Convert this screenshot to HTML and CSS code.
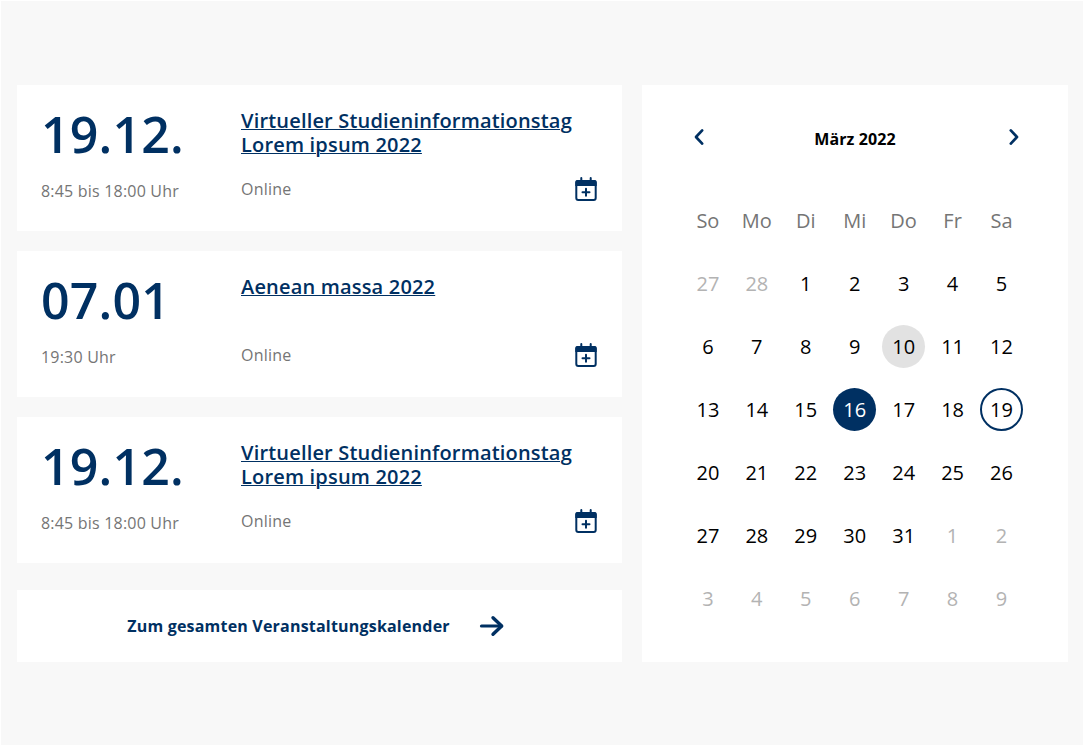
FILE: index.html
```html
<!DOCTYPE html>
<html lang="de">
<head>
<meta charset="utf-8">
<title>Veranstaltungen</title>
<link rel="stylesheet" href="styles.css">
</head>
<body>
<svg class="symbols" aria-hidden="true">
  <symbol id="calendar-plus" viewBox="0 0 22 24">
    <rect x="1.300" y="4" width="19.400" height="19" rx="2" fill="none" stroke="currentColor" stroke-width="2"/>
    <path d="M2.300 3h17.400a2 2 0 0 1 2 2v4H.300V5a2 2 0 0 1 2-2z" fill="currentColor"/>
    <path d="M6.300 4V1M15.700 4V1M11 11.800v7M7.500 15.300h7" fill="none" stroke="currentColor" stroke-width="2" stroke-linecap="round"/>
  </symbol>
</svg>
<main class="layout">
  <section class="events">
    <article class="event">
      <div class="when"><div class="date">19.12.</div><div class="time">8:45 bis 18:00 Uhr</div></div>
      <div class="info"><a class="title" href="#">Virtueller Studieninformationstag Lorem ipsum 2022</a><div class="place">Online<svg class="add"><use href="#calendar-plus"/></svg></div></div>
    </article>
    <article class="event">
      <div class="when"><div class="date">07.01</div><div class="time">19:30 Uhr</div></div>
      <div class="info"><a class="title" href="#">Aenean massa 2022</a><div class="place">Online<svg class="add"><use href="#calendar-plus"/></svg></div></div>
    </article>
    <article class="event">
      <div class="when"><div class="date">19.12.</div><div class="time">8:45 bis 18:00 Uhr</div></div>
      <div class="info"><a class="title" href="#">Virtueller Studieninformationstag Lorem ipsum 2022</a><div class="place">Online<svg class="add"><use href="#calendar-plus"/></svg></div></div>
    </article>
    <a class="all" href="#">Zum gesamten Veranstaltungskalender
      <svg class="arrow" viewBox="0 0 26 22"><path d="M2.500 11H22.500" fill="none" stroke="currentColor" stroke-width="3.200" stroke-linecap="round"/><path d="M14 2.700l8.700 8.300-8.700 8.300" fill="none" stroke="currentColor" stroke-width="3.400" stroke-linecap="round" stroke-linejoin="round"/></svg>
    </a>
  </section>
  <section class="calendar">
    <header class="month">
      <svg class="chevron" viewBox="0 0 12 18"><path d="M9.200 2.400L3 9l6.200 6.600" fill="none" stroke="currentColor" stroke-width="2.700" stroke-linecap="round" stroke-linejoin="round"/></svg>
      <span class="month-name">März 2022</span>
      <svg class="chevron" viewBox="0 0 12 18"><path d="M2.800 2.400L9 9l-6.200 6.600" fill="none" stroke="currentColor" stroke-width="2.700" stroke-linecap="round" stroke-linejoin="round"/></svg>
    </header>
    <div class="days">
      <span class="head">So</span><span class="head">Mo</span><span class="head">Di</span><span class="head">Mi</span><span class="head">Do</span><span class="head">Fr</span><span class="head">Sa</span>
      <span class="out">27</span><span class="out">28</span><span>1</span><span>2</span><span>3</span><span>4</span><span>5</span>
      <span>6</span><span>7</span><span>8</span><span>9</span><span class="hover">10</span><span>11</span><span>12</span>
      <span>13</span><span>14</span><span>15</span><span class="selected">16</span><span>17</span><span>18</span><span class="today">19</span>
      <span>20</span><span>21</span><span>22</span><span>23</span><span>24</span><span>25</span><span>26</span>
      <span>27</span><span>28</span><span>29</span><span>30</span><span>31</span><span class="out">1</span><span class="out">2</span>
      <span class="out">3</span><span class="out">4</span><span class="out">5</span><span class="out">6</span><span class="out">7</span><span class="out">8</span><span class="out">9</span>
    </div>
  </section>
</main>
</body>
</html>
```

FILE: styles.css
```css
* { box-sizing: border-box; }
html { background: #fff; }
body {
  margin: 0;
  background: #fff;
  font-family: "Open Sans", sans-serif;
  color: #000;
}
.symbols { display: none; }
.layout {
  display: grid;
  grid-template-columns: 605px 426px;
  gap: 20px;
  height: 745px;
  padding: 84px 0 0 16px;
  border-top: 1px solid #fff;
  border-left: 1px solid #fff;
  background: #f8f8f8;
}
.events { display: flex; flex-direction: column; gap: 20px; letter-spacing: 0.2px; }
.event {
  display: grid;
  grid-template-columns: 200px 1fr;
  height: 146px;
  padding: 24px;
  background: #fff;
}
.date {
  height: 50px;
  font-size: 50px;
  line-height: 50px;
  font-weight: 600;
  color: #003062;
}
.time { margin-top: 20px; }
.time, .place { font-size: 16px; line-height: 24px; color: #757575; }
.info { display: flex; flex-direction: column; justify-content: space-between; }
.title {
  font-size: 20px;
  line-height: 24px;
  font-weight: 600;
  letter-spacing: 0.18px;
  color: #003062;
  text-decoration-thickness: 1px;
}
.place { display: flex; justify-content: space-between; margin-bottom: 6px; }
.add { width: 22px; height: 24px; color: #003062; margin-right: 1px; }
.all {
  display: flex;
  align-items: center;
  justify-content: center;
  gap: 29px;
  height: 72px;
  margin-top: 7px;
  padding-right: 7px;
  background: #fff;
  color: #003062;
  font-size: 16px;
  font-weight: 700;
  text-decoration: none;
}
.arrow { width: 26px; height: 22px; }
.calendar { height: 577px; padding: 40px 41px; background: #fff; }
.month {
  display: flex;
  justify-content: space-between;
  height: 24px;
  padding: 0 7px 0 10px;
  font-size: 16px;
  line-height: 28px;
  font-weight: 700;
  letter-spacing: 0.1px;
}
.month-name { margin-right: 3px; }
.chevron { width: 12px; height: 18px; margin-top: 3px; color: #003062; }
.days {
  display: grid;
  grid-template-columns: repeat(7, 43px);
  grid-auto-rows: 43px;
  gap: 20px 5.950px;
  margin: 50px 0 0 3.400px;
  font-size: 20px;
  line-height: 43px;
  text-align: center;
}
.head { color: #757575; }
.out { color: #b3b3b3; }
.hover { border-radius: 50%; background: #e2e2e2; }
.selected { border-radius: 50%; background: #003062; color: #fff; }
.today { border: 2px solid #003062; border-radius: 50%; line-height: 39px; }
```
